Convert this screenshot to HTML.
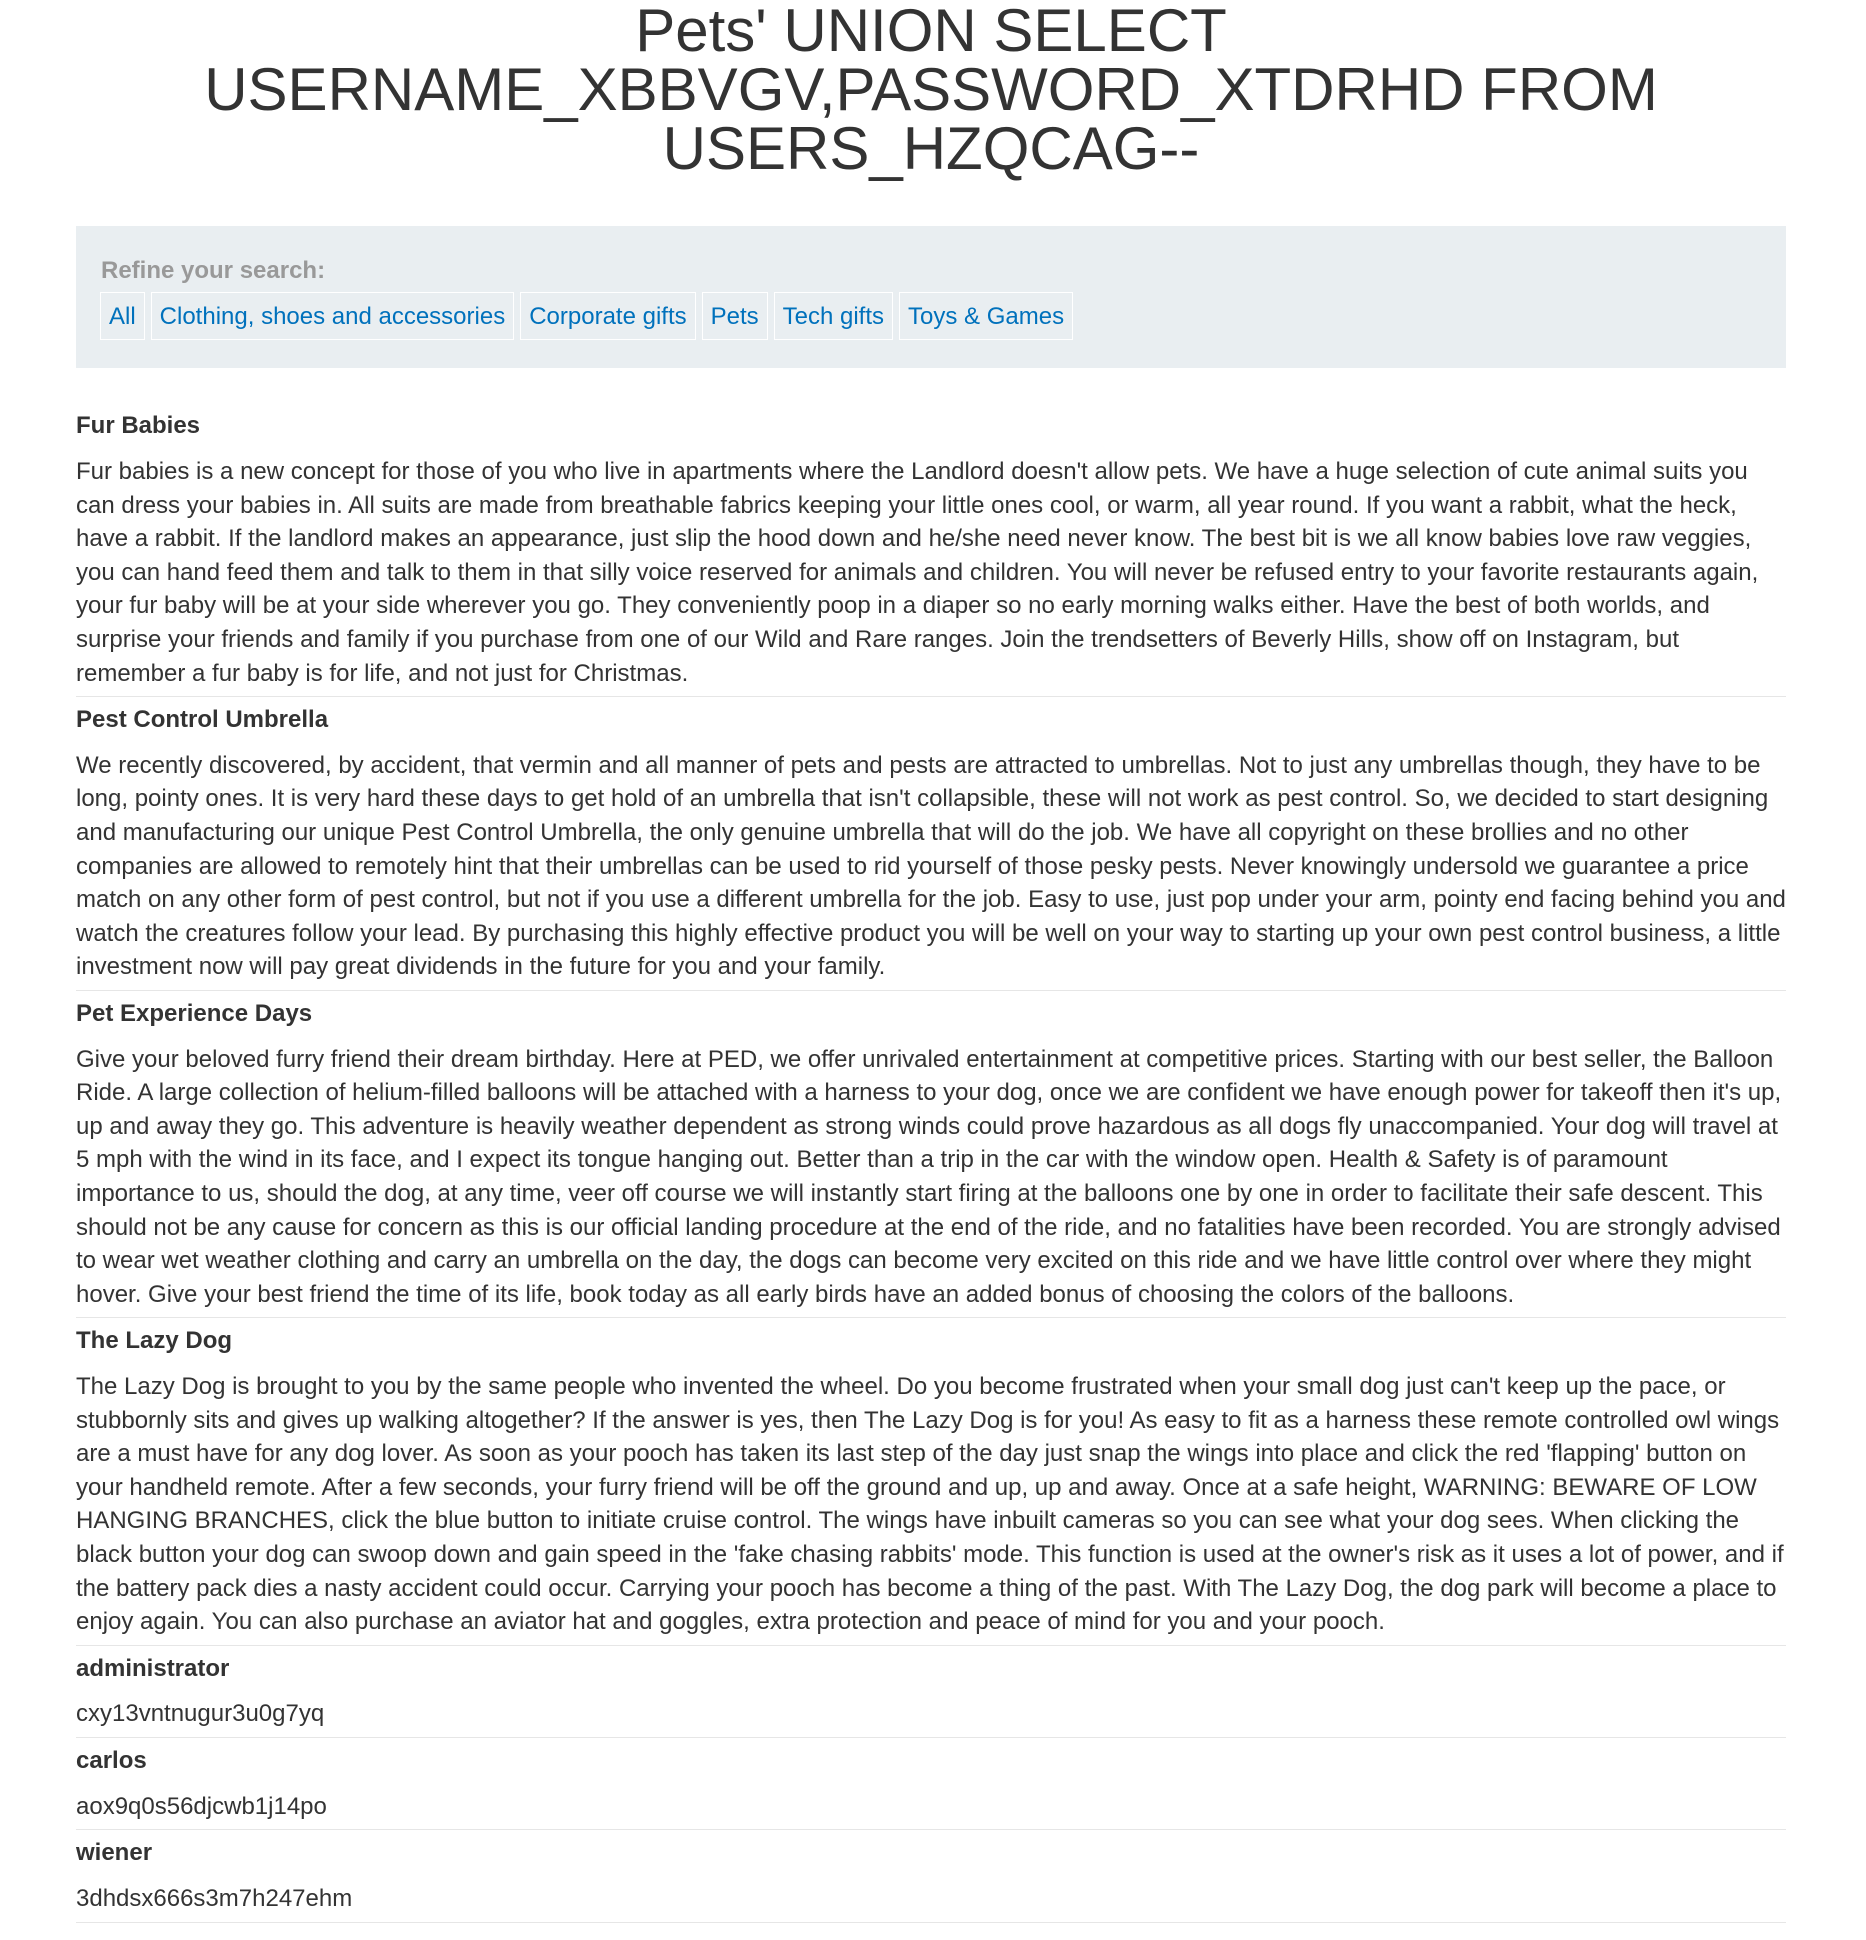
<!DOCTYPE html>
<html><head><meta charset="utf-8"><style>
body{margin:0;background:#fff;font-family:"Liberation Sans",Arial,sans-serif;color:#333;}
.c{position:absolute;left:76px;width:1710px;top:0;}
h1{margin:1px 0 0;font-weight:normal;font-size:60px;line-height:59px;text-align:center;color:#333;}
.box{margin-top:48px;background:#e9eef1;height:142px;padding:0 23px;box-sizing:border-box;position:relative;}
.ref{position:absolute;top:28px;left:25px;font-weight:bold;color:#999;font-size:24px;line-height:34px;}
.btns{position:absolute;top:66px;left:24px;display:flex;gap:6px;}
.btns a{display:block;border:1.5px solid #fff;height:48px;box-sizing:border-box;padding:0 8px;font-size:24px;line-height:47px;color:#0071bc;text-decoration:none;}
.list{margin-top:41px;}
h3{margin:0 0 12.4px;font-size:24px;line-height:33.6px;font-weight:bold;color:#333;}
p{margin:0;font-size:24px;line-height:33.6px;}
hr{border:0;border-top:1.5px solid #e6e6e6;margin:6px 0 5.7px;}
</style></head><body><div class="c">
<h1>Pets' UNION SELECT USERNAME_XBBVGV,PASSWORD_XTDRHD FROM USERS_HZQCAG--</h1>
<div class="box"><div class="ref">Refine your search:</div>
<div class="btns"><a>All</a><a>Clothing, shoes and accessories</a><a>Corporate gifts</a><a>Pets</a><a>Tech gifts</a><a>Toys &amp; Games</a></div></div>
<div class="list">
<h3>Fur Babies</h3>
<p>Fur babies is a new concept for those of you who live in apartments where the Landlord doesn't allow pets. We have a huge selection of cute animal suits you can dress your babies in. All suits are made from breathable fabrics keeping your little ones cool, or warm, all year round. If you want a rabbit, what the heck, have a rabbit. If the landlord makes an appearance, just slip the hood down and he/she need never know. The best bit is we all know babies love raw veggies, you can hand feed them and talk to them in that silly voice reserved for animals and children. You will never be refused entry to your favorite restaurants again, your fur baby will be at your side wherever you go. They conveniently poop in a diaper so no early morning walks either. Have the best of both worlds, and surprise your friends and family if you purchase from one of our Wild and Rare ranges. Join the trendsetters of Beverly Hills, show off on Instagram, but remember a fur baby is for life, and not just for Christmas.</p>
<hr>
<h3>Pest Control Umbrella</h3>
<p>We recently discovered, by accident, that vermin and all manner of pets and pests are attracted to umbrellas. Not to just any umbrellas though, they have to be long, pointy ones. It is very hard these days to get hold of an umbrella that isn't collapsible, these will not work as pest control. So, we decided to start designing and manufacturing our unique Pest Control Umbrella, the only genuine umbrella that will do the job. We have all copyright on these brollies and no other companies are allowed to remotely hint that their umbrellas can be used to rid yourself of those pesky pests. Never knowingly undersold we guarantee a price match on any other form of pest control, but not if you use a different umbrella for the job. Easy to use, just pop under your arm, pointy end facing behind you and watch the creatures follow your lead. By purchasing this highly effective product you will be well on your way to starting up your own pest control business, a little investment now will pay great dividends in the future for you and your family.</p>
<hr>
<h3>Pet Experience Days</h3>
<p>Give your beloved furry friend their dream birthday. Here at PED, we offer unrivaled entertainment at competitive prices. Starting with our best seller, the Balloon Ride. A large collection of helium-filled balloons will be attached with a harness to your dog, once we are confident we have enough power for takeoff then it's up, up and away they go. This adventure is heavily weather dependent as strong winds could prove hazardous as all dogs fly unaccompanied. Your dog will travel at 5 mph with the wind in its face, and I expect its tongue hanging out. Better than a trip in the car with the window open. Health &amp; Safety is of paramount importance to us, should the dog, at any time, veer off course we will instantly start firing at the balloons one by one in order to facilitate their safe descent. This should not be any cause for concern as this is our official landing procedure at the end of the ride, and no fatalities have been recorded. You are strongly advised to wear wet weather clothing and carry an umbrella on the day, the dogs can become very excited on this ride and we have little control over where they might hover. Give your best friend the time of its life, book today as all early birds have an added bonus of choosing the colors of the balloons.</p>
<hr>
<h3>The Lazy Dog</h3>
<p>The Lazy Dog is brought to you by the same people who invented the wheel. Do you become frustrated when your small dog just can't keep up the pace, or stubbornly sits and gives up walking altogether? If the answer is yes, then The Lazy Dog is for you! As easy to fit as a harness these remote controlled owl wings are a must have for any dog lover. As soon as your pooch has taken its last step of the day just snap the wings into place and click the red 'flapping' button on your handheld remote. After a few seconds, your furry friend will be off the ground and up, up and away. Once at a safe height, WARNING: BEWARE OF LOW HANGING BRANCHES, click the blue button to initiate cruise control. The wings have inbuilt cameras so you can see what your dog sees. When clicking the black button your dog can swoop down and gain speed in the 'fake chasing rabbits' mode. This function is used at the owner's risk as it uses a lot of power, and if the battery pack dies a nasty accident could occur. Carrying your pooch has become a thing of the past. With The Lazy Dog, the dog park will become a place to enjoy again. You can also purchase an aviator hat and goggles, extra protection and peace of mind for you and your pooch.</p>
<hr>
<h3>administrator</h3>
<p>cxy13vntnugur3u0g7yq</p>
<hr>
<h3>carlos</h3>
<p>aox9q0s56djcwb1j14po</p>
<hr>
<h3>wiener</h3>
<p>3dhdsx666s3m7h247ehm</p>
<hr>
</div></div></body></html>
